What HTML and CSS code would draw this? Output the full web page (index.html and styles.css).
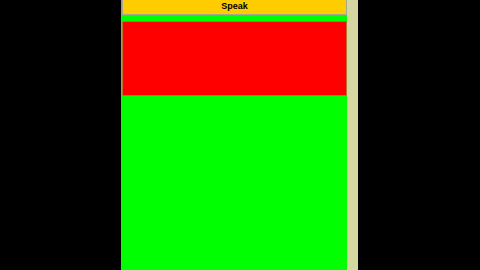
FILE: index.html
```html
<!DOCTYPE html>
<html>
<head>
<meta charset="utf-8">
<link rel="stylesheet" href="styles.css">
</head>
<body>
<div class="frame">
  <div class="main">
    <button class="speak">Speak</button>
    <div class="red"></div>
  </div>
  <div class="side"></div>
</div>
</body>
</html>
```
FILE: styles.css
```css
html, body {
  margin: 0;
  padding: 0;
  background: #000;
  height: 270px;
  overflow: hidden;
}
.frame {
  margin-left: 121px;
  width: 237px;
  height: 270px;
  display: flex;
}
.main {
  width: 226px;
  background: #00ff00;
  display: flex;
  flex-direction: column;
  padding: 0 0 0 1px;
  box-sizing: border-box;
  gap: 6px;
}
.speak {
  display: block;
  width: 225px;
  height: 15px;
  margin: 0;
  padding: 0 0 3px 0;
  background: #ffcc00;
  border: 1px solid #a8a890;
  border-top: none;
  font-family: "Liberation Sans", Arial, sans-serif;
  font-weight: bold;
  font-size: 9px;
  color: #000;
  line-height: 10px;
}
.red {
  width: 225px;
  height: 75px;
  background: #ff0000;
  border: 1px solid #b87333;
  box-sizing: border-box;
}
.side {
  width: 11px;
  background: #d6d6a0;
}
```
